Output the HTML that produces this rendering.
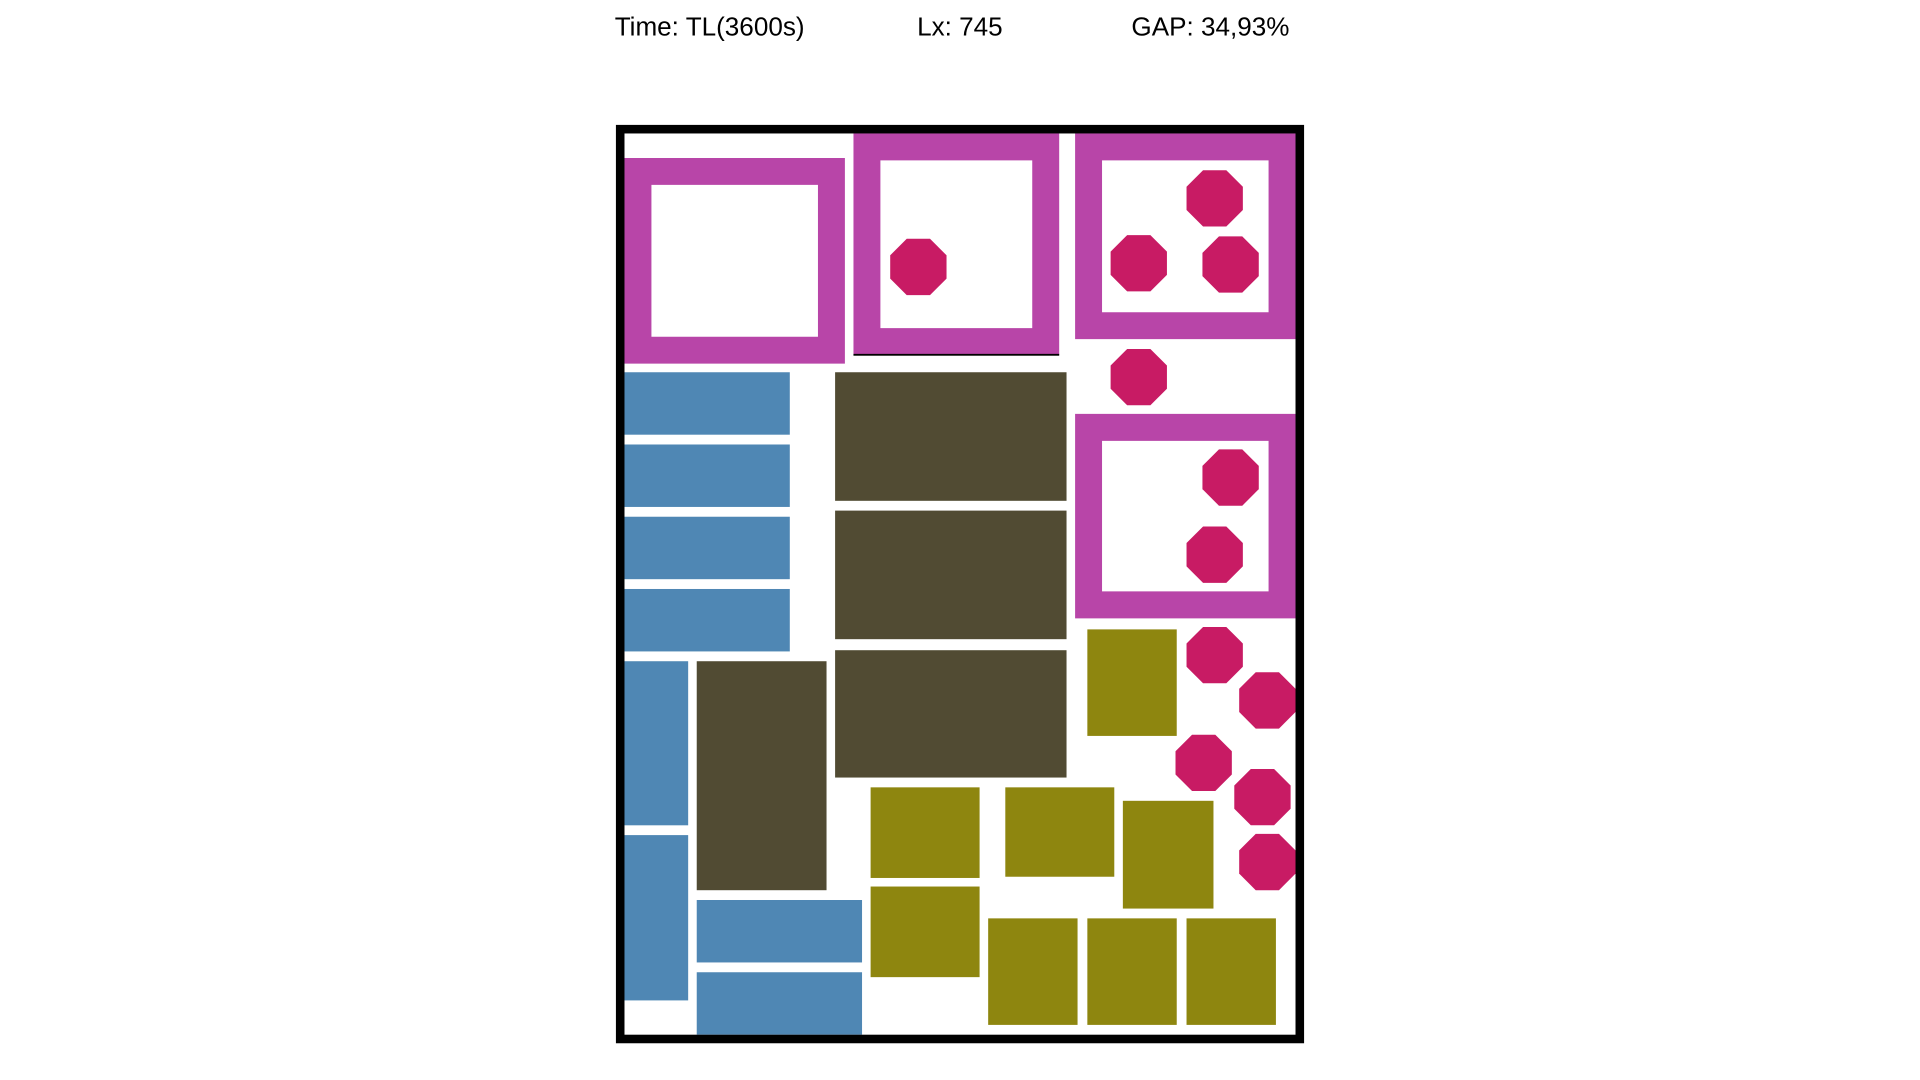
<!DOCTYPE html>
<html><head><style>html,body{margin:0;padding:0;background:#fff;width:1920px;height:1080px;overflow:hidden}svg{display:block}</style></head>
<body>
<svg width="1920" height="1080" viewBox="0 0 1568 882" xmlns="http://www.w3.org/2000/svg">
<defs><polygon id="o" points="-9.5,-23 9.5,-23 23,-9.5 23,9.5 9.5,23 -9.5,23 -23,9.5 -23,-9.5" fill="#c81b64"/></defs>
<g font-family="Liberation Sans, sans-serif" font-size="21.3" fill="#000">
<text x="502" y="29">Time: TL(3600s)</text>
<text x="749" y="29">Lx: 745</text>
<text x="924" y="29">GAP: 34,93%</text>
</g>
<g fill="#b845a8">
<path fill-rule="evenodd" d="M510 129h180v168h-180zM532 151v124h136v-124z"/>
<path fill-rule="evenodd" d="M697 109h168v181h-168zM719 131v137h124v-137z"/>
<path fill-rule="evenodd" d="M878 109h180v168h-180zM900 131v124h136v-124z"/>
<path fill-rule="evenodd" d="M878 338h180v167h-180zM900 360v123h136v-123z"/>
</g>
<rect x="697" y="289" width="168" height="1.5" fill="#000"/>
<g fill="#4f87b4">
<rect x="510" y="304" width="135" height="51"/>
<rect x="510" y="363" width="135" height="51"/>
<rect x="510" y="422" width="135" height="51"/>
<rect x="510" y="481" width="135" height="51"/>
<rect x="510" y="540" width="52" height="134"/>
<rect x="510" y="682" width="52" height="135"/>
<rect x="569" y="735" width="135" height="51"/>
<rect x="569" y="794" width="135" height="51"/>
</g>
<g fill="#514b33">
<rect x="682" y="304" width="189" height="105"/>
<rect x="682" y="417" width="189" height="105"/>
<rect x="682" y="531" width="189" height="104"/>
<rect x="569" y="540" width="106" height="187"/>
</g>
<g fill="#8e860f">
<rect x="888" y="514" width="73" height="87"/>
<rect x="711" y="643" width="89" height="74"/>
<rect x="821" y="643" width="89" height="73"/>
<rect x="917" y="654" width="74" height="88"/>
<rect x="711" y="724" width="89" height="74"/>
<rect x="807" y="750" width="73" height="87"/>
<rect x="888" y="750" width="73" height="87"/>
<rect x="969" y="750" width="73" height="87"/>
</g>
<use href="#o" x="750" y="218"/>
<use href="#o" x="992" y="162"/>
<use href="#o" x="930" y="215"/>
<use href="#o" x="1005" y="216"/>
<use href="#o" x="930" y="308"/>
<use href="#o" x="1005" y="390"/>
<use href="#o" x="992" y="453"/>
<use href="#o" x="992" y="535"/>
<use href="#o" x="1035" y="572"/>
<use href="#o" x="983" y="623"/>
<use href="#o" x="1031" y="651"/>
<use href="#o" x="1035" y="704"/>
<rect x="506.5" y="105.5" width="555" height="743" fill="none" stroke="#000" stroke-width="7"/>
</svg>
</body></html>
